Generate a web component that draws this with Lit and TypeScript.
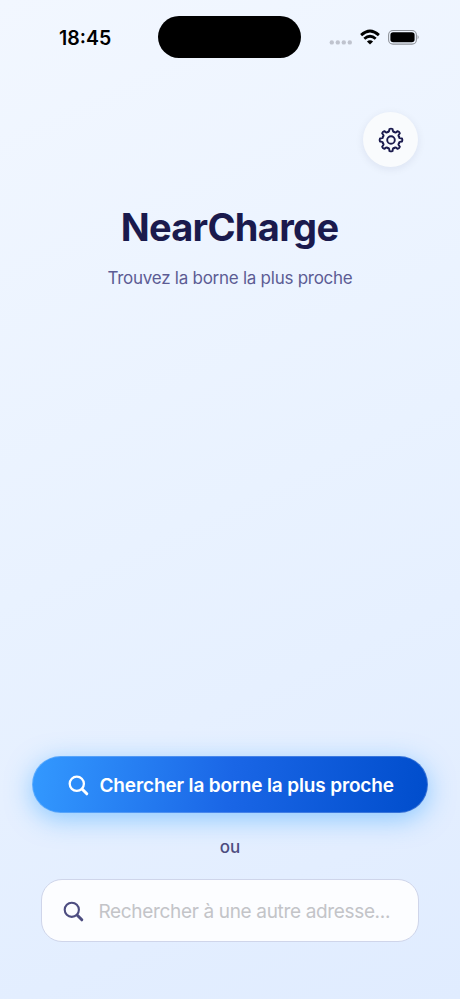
import { LitElement, html, css, svg } from "lit";
import { customElement } from "lit/decorators.js";

const gearPath = (): string => {
  const pts: string[] = [];
  const at = (r: number, deg: number) => {
    const a = (deg * Math.PI) / 180;
    return `${(14 + r * Math.sin(a)).toFixed(2)} ${(14 - r * Math.cos(a)).toFixed(2)}`;
  };
  for (let i = 0; i < 8; i++) {
    const c = i * 45;
    pts.push(`${i === 0 ? "M" : "L"}${at(11.1, c - 8)}`);
    pts.push(`Q${at(11.8, c)} ${at(11.1, c + 8)}`);
    pts.push(`L${at(9.1, c + 12)}`);
    pts.push(`Q${at(8, c + 16)} ${at(8.9, c + 22.5)}`);
    pts.push(`Q${at(8, c + 29)} ${at(9.1, c + 33)}`);
  }
  return pts.join("") + "Z";
};

const searchIcon = svg`<circle cx="8.8" cy="8.8" r="7.1"></circle><path d="M14.3 14.3L18.8 18.8" stroke-width="3"></path>`;

@customElement("app-root")
export class AppRoot extends LitElement {
  static styles = css`
    :host {
      display: block;
      height: 999px;
      font-family: Inter, "Liberation Sans", sans-serif;
    }
    * { box-sizing: border-box; }
    svg { display: block; flex: none; }
    .screen {
      height: 100%;
      overflow: hidden;
      display: flex;
      flex-direction: column;
      background: linear-gradient(155.3deg, #f2f7ff 0%, #e9f2ff 50%, #e0ecff 100%);
    }
    .status {
      height: 112px;
      padding: 16px 40px 0 59px;
      display: flex;
      align-items: flex-start;
    }
    .time {
      width: 99px;
      font-size: 19.5px;
      line-height: 44px;
      font-weight: 600;
      letter-spacing: 0;
      color: #000;
    }
    .island {
      width: 144px;
      height: 42px;
      border-radius: 21px;
      background: #000;
    }
    .signals {
      margin-left: 27px;
      padding-top: 0;
    }
    .toolbar {
      display: flex;
      justify-content: flex-end;
      padding-right: 42px;
    }
    .settings {
      width: 55px;
      height: 55px;
      padding: 0;
      border: 0;
      border-radius: 50%;
      display: grid;
      place-items: center;
      background: #f9fbfd;
      box-shadow: 0 2px 9px rgba(26, 26, 77, 0.08);
    }
    .title {
      margin: 35px 0 0;
      text-align: center;
      font-size: 38px;
      line-height: 50px;
      font-weight: 700;
      letter-spacing: -0.68px;
      text-indent: -1px;
      color: #1a1a4d;
    }
    .subtitle {
      margin: 14px 0 0;
      text-align: center;
      font-size: 17px;
      line-height: 24px;
      letter-spacing: -0.26px;
      color: #5c5c94;
    }
    .actions {
      margin-top: auto;
      padding-bottom: 57px;
      display: flex;
      flex-direction: column;
      align-items: center;
    }
    .primary {
      width: 396px;
      height: 57px;
      padding: 1px 0 0 35px;
      border: 1px solid rgba(255, 255, 255, 0.2);
      border-radius: 29px;
      display: flex;
      align-items: center;
      gap: 10.5px;
      font: inherit;
      font-size: 19px;
      font-weight: 600;
      letter-spacing: -0.13px;
      white-space: nowrap;
      color: #fff;
      background: linear-gradient(98.2deg, #3399ff 0%, #1a66e6 50%, #004dcc 100%) border-box;
      box-shadow: 0 6px 26px rgba(51, 163, 255, 0.5);
    }
    .or {
      margin: 22px 0 20px;
      font-size: 17px;
      line-height: 24px;
      font-weight: 500;
      color: #4d4d80;
    }
    .field {
      width: 378px;
      height: 63px;
      padding: 1px 0 0 21px;
      border: 1px solid #cfd5ea;
      border-radius: 21px;
      display: flex;
      align-items: center;
      gap: 14.5px;
      background: #fcfdff;
      font-size: 19px;
      letter-spacing: -0.34px;
      white-space: nowrap;
      color: #c3c4c8;
    }
  `;

  render() {
    return html`
      <main class="screen">
        <header class="status">
          <span class="time">18:45</span>
          <span class="island"></span>
          <svg class="signals" width="92" height="42" viewBox="0 -13 92 42">
            <g fill="#bfc3ce">
              <circle cx="3.8" cy="13.4" r="2.2"></circle>
              <circle cx="9.8" cy="13.4" r="2.2"></circle>
              <circle cx="15.8" cy="13.4" r="2.2"></circle>
              <circle cx="21.8" cy="13.4" r="2.2"></circle>
            </g>
            <g fill="none" stroke="#000" stroke-width="2.8">
              <path d="M33.1 6.1Q42 -2.1 50.9 6.1"></path>
              <path d="M36.3 9.8Q42 4.8 47.7 9.8"></path>
            </g>
            <path d="M38.9 12.5Q42 9.8 45.1 12.5L42 15.6Z"></path>
            <rect x="60.6" y="1.5" width="27.8" height="13.6" rx="4.4" fill="none" stroke="#8e9299" stroke-width="1.1"></rect>
            <rect x="62.4" y="3.3" width="24.2" height="10" rx="2.8"></rect>
            <path d="M89.6 6Q91.6 8.2 89.6 10.4Z" fill="#8e9299"></path>
          </svg>
        </header>
        <div class="toolbar">
          <button class="settings" aria-label="Réglages">
            <svg width="28" height="28" viewBox="0 0 28 28" fill="none" stroke="#1a1a4d" stroke-width="1.9" stroke-linejoin="round">
              <path d=${gearPath()}></path>
              <circle cx="14" cy="14" r="3.8"></circle>
            </svg>
          </button>
        </div>
        <h1 class="title">NearCharge</h1>
        <p class="subtitle">Trouvez la borne la plus proche</p>
        <section class="actions">
          <button class="primary">
            <svg width="21" height="21" viewBox="0 0 21 21" fill="none" stroke="#fff" stroke-width="2.3" stroke-linecap="round">${searchIcon}</svg>
            <span>Chercher la borne la plus proche</span>
          </button>
          <span class="or">ou</span>
          <div class="field">
            <svg width="21" height="21" viewBox="0 0 21 21" fill="none" stroke="#4d4d80" stroke-width="2.1" stroke-linecap="round">${searchIcon}</svg>
            <span>Rechercher à une autre adresse...</span>
          </div>
        </section>
      </main>
    `;
  }
}
